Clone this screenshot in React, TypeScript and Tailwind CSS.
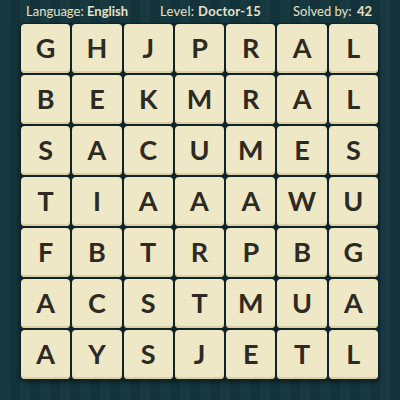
const rows = [
  'GHJPRAL',
  'BEKMRAL',
  'SACUMES',
  'TIAAAWU',
  'FBTRPBG',
  'ACSTMUA',
  'AYSJETL',
];

export default function App() {
  return (
    <div
      className="w-[400px] h-[400px] overflow-hidden bg-[repeating-linear-gradient(90deg,#173a40_0px,#173a40_10px,#13323a_10px,#13323a_20px)]"
      style={{ fontFamily: 'Lato, "Open Sans", sans-serif' }}
    >
      <div className="h-[23px] flex items-center justify-between pl-[26px] pr-[28px] text-[13px] text-[#e6e2c6] leading-none">
        <span>
          Language: <b className="font-bold">English</b>
        </span>
        <span className="tracking-[0.3px]">
          Level: <b className="font-bold">Doctor-15</b>
        </span>
        <span>
          Solved by: <b className="font-bold ml-[2px]">42</b>
        </span>
      </div>
      <div className="ml-[20px] w-[359px] p-[1px] rounded-[5px] bg-[#0e2428] shadow-[0_2px_4px_rgba(0,0,0,0.5)]">
        <div className="grid grid-cols-7 gap-[2px]">
          {rows.join('').split('').map((ch, i) => (
            <div
              key={i}
              className="h-[49px] rounded-[4px] bg-[#efe8c6] shadow-[inset_0_-2px_0_#d9d0a8] flex items-center justify-center text-[27px] font-bold text-[#2c2a22]"
            >
              {ch}
            </div>
          ))}
        </div>
      </div>
    </div>
  );
}
